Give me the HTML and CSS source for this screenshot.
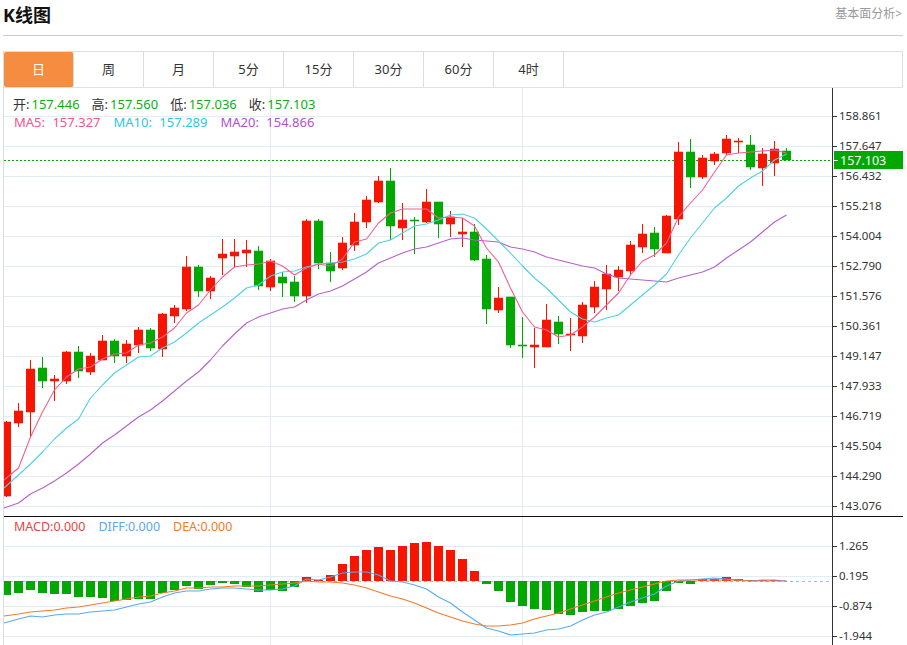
FILE: index.html
```html
<!DOCTYPE html>
<html lang="zh">
  <head>
    <meta charset="utf-8" />
    <title>K线图</title>
    <link rel="stylesheet" href="styles.css">
  </head>

  <body>
    <div class="head">
      <h2 class="title">K线图</h2>
      <a class="more" href="#">基本面分析&gt;</a>
    </div>

    <div class="card">
      <ul class="tabs">
        <li class="active">日</li>
        <li>周</li>
        <li>月</li>
        <li>5分</li>
        <li>15分</li>
        <li>30分</li>
        <li>60分</li>
        <li>4时</li>
      </ul>

      <div class="chart">
        <svg id="plot" class="plot" width="899" height="557" viewBox="4 88 899 557">
          <g id="layers"></g>
          <g class="axis-text">
            <text x="839" y="120">158.861</text>
            <text x="839" y="150">157.647</text>
            <text x="839" y="180">156.432</text>
            <text x="839" y="210">155.218</text>
            <text x="839" y="240">154.004</text>
            <text x="839" y="270">152.790</text>
            <text x="839" y="300">151.576</text>
            <text x="839" y="330">150.361</text>
            <text x="839" y="360">149.147</text>
            <text x="839" y="390">147.933</text>
            <text x="839" y="420">146.719</text>
            <text x="839" y="450">145.504</text>
            <text x="839" y="480">144.290</text>
            <text x="839" y="510">143.076</text>
            <text x="839" y="550">1.265</text>
            <text x="839" y="580">0.195</text>
            <text x="839" y="610">-0.874</text>
            <text x="839" y="640">-1.944</text>
          </g>
          <rect class="tag" x="834" y="151" width="69" height="18"></rect>
          <rect class="tag-tick" x="834" y="160" width="4" height="1"></rect>
          <text class="tag-text" x="840" y="165">157.103</text>
        </svg>

        <div class="legend legend-ohlc">
          <span class="item"><b>开:</b><i>157.446</i></span>
          <span class="item"><b>高:</b><i>157.560</i></span>
          <span class="item"><b>低:</b><i>157.036</i></span>
          <span class="item"><b>收:</b><i>157.103</i></span>
        </div>
        <div class="legend legend-ma">
          <span class="ma5">MA5: 157.327</span>
          <span class="ma10">MA10: 157.289</span>
          <span class="ma20">MA20: 154.866</span>
        </div>
        <div class="legend legend-macd">
          <span class="macd">MACD:0.000</span>
          <span class="diff">DIFF:0.000</span>
          <span class="dea">DEA:0.000</span>
        </div>
      </div>
    </div>

    <script src="script.js"></script>
  </body>
</html>
```

FILE: styles.css
```css
body {
  margin: 0;
  width: 903px;
  height: 645px;
  overflow: hidden;
  background: #fff;
  font-family: "Noto Sans", "Noto Sans CJK SC", sans-serif;
  color: #333;
}

.head {
  display: flex;
  justify-content: space-between;
  height: 35px;
  margin-left: 3px;
  padding-right: 1px;
  border-bottom: 1px solid #ccc;
}

.title {
  margin: 0;
  font-size: 18px;
  line-height: 30px;
  font-weight: bold;
  color: #111;
}

.more {
  font-size: 12px;
  line-height: 27px;
  color: #999;
  text-decoration: none;
}

.card {
  margin: 15px 0 0 3px;
  border-top: 1px solid #ddd;
  border-left: 1px solid #ddd;
}

.tabs {
  display: flex;
  height: 35px;
  margin: 0;
  padding: 0;
  list-style: none;
  border-bottom: 1px solid #e2e2e2;
  border-right: 1px solid #ddd;
}

.tabs li {
  width: 69px;
  border-right: 1px solid #ddd;
  font-size: 13px;
  line-height: 35px;
  text-align: center;
}

.tabs li.active {
  background: #f58c40;
  border-radius: 2px;
  color: #fff;
}

.chart {
  position: relative;
  height: 557px;
}

.plot {
  display: block;
}

.axis-text text {
  font-size: 11.5px;
  fill: #333;
}

.tag {
  fill: #02a802;
}

.tag-tick {
  fill: #fff;
}

.tag-text {
  font-size: 12.5px;
  fill: #fff;
}

.legend {
  position: absolute;
  left: 10px;
  display: flex;
  font-size: 13px;
  line-height: 18px;
  white-space: nowrap;
}

.legend-ohlc {
  top: 7px;
  left: 9px;
  gap: 12px;
}

.legend-ohlc b {
  margin-right: 2px;
  font-weight: normal;
}

.legend-ohlc i {
  font-style: normal;
  color: #12ac12;
}

.legend-ma {
  top: 25px;
  gap: 13px;
  word-spacing: 4px;
}

.legend-macd {
  top: 430px;
  gap: 13px;
  font-size: 12.5px;
}

.ma5 { color: #f3548b; }
.ma10 { color: #2ac8e0; }
.ma20 { color: #b350c8; }
.macd { color: #e84545; }
.diff { color: #5aa9f0; }
.dea { color: #f57a26; }
```

FILE: script.js
```js
// [body top, body bottom, wick top, wick bottom, 1 = red / 0 = green] in page pixels
let candles = [
  [422,496,421,497,1],[411,423,403,427,1],[369,412,360,437,1],[368,381,357,388,0],[379,381,375,401,1],
  [352,381,351,384,1],[352,371,346,378,0],[356,372,353,375,1],[341,360,335,360,1],[341,356,339,363,0],
  [344,356,340,363,1],[330,345,327,353,1],[330,348,328,351,0],[314,349,313,357,1],[308,316,305,323,1],
  [267,309,256,311,1],[267,291,265,297,0],[278,291,276,299,1],[254,258,239,275,1],[252,256,239,267,1],
  [250,253,240,267,1],[251,286,246,290,0],[261,287,259,291,1],[277,283,272,297,0],[282,296,276,302,0],
  [221,296,219,303,1],[221,263,219,269,0],[263,271,252,282,0],[243,268,237,270,1],[222,245,213,251,1],
  [200,222,196,228,1],[181,202,176,203,1],[181,226,168,240,0],[220,228,203,240,1],[220,221,217,254,0],
  [202,222,189,223,1],[202,224,202,238,0],[217,224,211,237,1],[232,234,218,247,1],[232,260,224,261,0],
  [259,309,255,324,0],[298,310,287,313,1],[297,345,297,348,0],[345,346,317,358,0],[345,347,328,368,1],
  [320,347,304,347,1],[322,334,316,344,0],[334,335,318,351,1],[305,336,302,343,1],[287,307,281,313,1],
  [274,289,265,310,1],[270,277,266,291,1],[245,271,241,275,1],[234,247,224,253,1],[233,249,227,257,0],
  [216,253,215,253,1],[152,219,142,225,1],[152,177,139,188,0],[158,177,155,179,1],[154,161,152,165,1],
  [139,153,135,155,1],[141,142,138,153,1],[145,167,135,170,0],[154,168,148,186,1],[149,163,141,176,1],
  [151,160,148,160,0]
];

let ma5 = [480,468,437,412,390,377,369,367,359,354,353,345,343,337,328,313,305,290,277,267,265,264,261,266,275,268,264,266,259,242,239,223,213,209,209,209,218,217,218,226,248,262,288,312,327,330,337,335,327,317,305,293,275,261,255,243,217,203,190,172,155,153,152,151,150,153];
let ma10 = [488,475,464,452,439,428,419,398,385,373,365,357,356,348,342,333,323,315,307,298,288,285,276,272,271,267,264,263,262,259,254,243,240,233,226,224,220,215,214,218,229,241,253,266,278,288,300,312,319,322,318,315,305,295,285,274,255,238,223,208,198,186,178,171,160,154];
let ma20 = [508,503,494,488,481,473,464,454,443,435,426,417,410,401,391,381,372,360,346,334,323,317,313,309,307,300,294,291,286,279,272,263,258,253,249,247,243,239,238,240,241,242,247,249,252,257,260,263,266,268,274,278,279,280,281,282,278,275,272,267,258,250,242,232,222,215];

// end of each MACD bar, the zero line is at y = 581
let bars = [595,593,590,593,594,594,597,597,598,601,600,599,599,593,590,586,589,585,583,584,587,592,590,591,587,577,580,575,564,556,550,547,550,546,543,542,546,550,559,571,584,591,602,606,609,610,614,615,612,611,611,609,606,603,601,591,583,584,579,579,577,579,580,580,580,581];
let diff = [623,619,616,617,615,614,614,612,611,610,607,604,602,597,593,591,591,589,588,588,589,590,590,589,586,579,580,577,573,572,572,575,581,582,585,589,597,603,612,620,628,631,635,634,633,630,629,626,620,615,612,607,602,598,594,586,581,580,579,578,579,580,581,580,580,581];
let dea = [616,614,612,611,610,608,607,605,603,601,599,597,596,593,591,588,588,587,587,586,586,586,585,584,583,581,582,582,583,585,588,592,596,599,603,608,613,617,621,624,626,626,625,623,619,616,613,609,605,601,597,593,590,587,584,581,580,580,580,580,580,580,581,581,581,581];

let RED = "#f51500";
let GREEN = "#02a802";
let layers = document.getElementById("layers");

function add(tag, attrs) {
  let el = document.createElementNS("http://www.w3.org/2000/svg", tag);
  for (let k in attrs) el.setAttribute(k, attrs[k]);
  layers.appendChild(el);
}

function line(x1, y1, x2, y2, color, extra) {
  add("line", Object.assign({ x1, y1, x2, y2, stroke: color, "stroke-width": 1 }, extra));
}

function center(i) {
  return 6.5 + 12 * i;
}

function maLine(values, color) {
  let points = values.map((y, i) => (i === 0 ? 4 : center(i)) + "," + y).join(" ");
  add("polyline", { points, fill: "none", stroke: color, "stroke-width": 1.1, "stroke-linejoin": "round" });
}

/* сетка */
for (let y = 116; y <= 506; y += 30) line(4, y + 0.5, 832, y + 0.5, "#e3ecf3");
for (let y = 546; y <= 636; y += 30) line(4, y + 0.5, 832, y + 0.5, "#e3ecf3");
line(270.5, 88, 270.5, 645, "#e3ecf3");
line(522.5, 88, 522.5, 645, "#e3ecf3");

/* оси */
line(4, 516.5, 903, 516.5, "#111");
line(832.5, 88, 832.5, 645, "#333");
for (let y = 116; y <= 506; y += 30) line(833, y + 0.5, 837, y + 0.5, "#333");
for (let y = 546; y <= 636; y += 30) line(833, y + 0.5, 837, y + 0.5, "#333");

/* текущая цена и ноль MACD */
line(4, 160.5, 832, 160.5, "#02a802", { "stroke-dasharray": "2 2" });
line(4, 581.5, 832, 581.5, "#8fc4dc", { "stroke-dasharray": "3 3" });

candles.forEach((c, i) => {
  let color = c[4] ? RED : GREEN;
  line(center(i), c[2], center(i), c[3], color);
  add("rect", { x: center(i) - 4.5, y: c[0] - 0.3, width: 9, height: c[1] - c[0] + 0.6, fill: color });
});

bars.forEach((end, i) => {
  if (end === 581) return;
  let top = Math.min(end, 581);
  add("rect", { x: center(i) - 4.5, y: top, width: 9, height: Math.abs(end - 581), fill: end < 581 ? RED : GREEN });
});

maLine(ma20, "#b860cc");
maLine(ma10, "#4fd0e6");
maLine(ma5, "#f3608f");
maLine(diff, "#5aa9f0");
maLine(dea, "#f57a26");
```
